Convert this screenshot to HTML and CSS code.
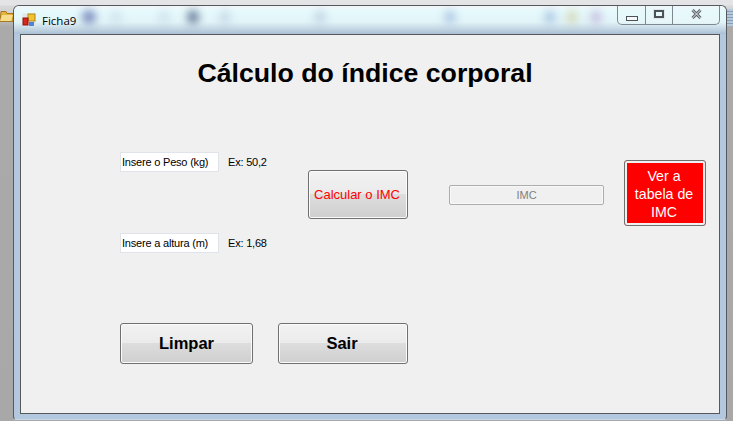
FILE: index.html
```html
<!DOCTYPE html>
<html lang="en">
  <head>
    <meta charset="UTF-8" />
    <title>Ficha9</title>
    <link rel="stylesheet" href="styles.css">
  </head>
  <body>
    <div class="desktop">
      <svg class="folder" width="13" height="13" viewBox="0 0 13 13">
        <path d="M1 2.5h5l1 2h6v8H0z" fill="#e8b23c" stroke="#a87a1c" stroke-width="1" />
        <path d="M2 6h11l-2 6H0z" fill="#f7dc8a" />
      </svg>
      <div class="behind-strip"></div>
      <div class="window">
        <div class="titlebar">
          <span class="blob b1"></span>
          <span class="blob b2"></span>
          <span class="blob b3"></span>
          <span class="blob b4"></span>
          <span class="blob b5"></span>
          <span class="blob b6"></span>
          <span class="blob b7"></span>
          <span class="blob b8"></span>
          <span class="blob b9"></span>
          <span class="blob b10"></span>
          <svg class="app-icon" width="14" height="14" viewBox="0 0 14 14">
            <rect x="0.5" y="0.5" width="13" height="13" fill="#e4e4e4" />
            <rect x="6" y="1" width="7" height="7" fill="#f2c230" stroke="#b08a18" />
            <rect x="1" y="5" width="5" height="7" fill="#d8261c" stroke="#8a1510" />
            <rect x="7" y="9" width="5" height="4" fill="#4a86d8" />
          </svg>
          <span class="title-text">Ficha9</span>
          <div class="win-buttons">
            <div class="win-btn min"><span class="min-glyph"></span></div>
            <div class="win-btn max"><span class="max-glyph"></span></div>
            <div class="win-btn close">
              <svg width="11" height="10" viewBox="0 0 11 10">
                <path d="M1.5 1l8 8M9.5 1l-8 8" stroke="#5a6068" stroke-width="3" />
                <path d="M1.5 1l8 8M9.5 1l-8 8" stroke="#eef2f5" stroke-width="1" />
              </svg>
            </div>
          </div>
        </div>
        <div class="client">
          <h1 class="heading">Cálculo do índice corporal</h1>
          <div class="form-row">
            <div class="inputs">
              <div class="input-row">
                <div class="textbox">Insere o Peso (kg)</div>
                <span class="hint">Ex: 50,2</span>
              </div>
              <div class="input-row">
                <div class="textbox">Insere a altura (m)</div>
                <span class="hint">Ex: 1,68</span>
              </div>
            </div>
            <button class="btn btn-calc">Calcular o IMC</button>
            <div class="result">IMC</div>
            <button class="btn-red">Ver a tabela de IMC</button>
          </div>
          <div class="actions">
            <button class="btn btn-big btn-clear">Limpar</button>
            <button class="btn btn-big btn-exit">Sair</button>
          </div>
        </div>
      </div>
    </div>
  </body>
</html>
```

FILE: styles.css
```css
html {
  font-family: "Liberation Sans", Arial, sans-serif;
}
body {
  margin: 0;
  padding: 0;
  overflow: hidden;
}
.desktop {
  position: relative;
  width: 733px;
  height: 421px;
  overflow: hidden;
  padding: 5px 6px 0 13px;
  box-sizing: border-box;
  background: linear-gradient(to bottom, #e4e4e6 0, #e4e4e6 5px, #d8d8da 6px, #cfcfcf 14px, #aaa 27px, #a8a8a8 100%);
}
.folder {
  position: absolute;
  left: 0;
  top: 9px;
}
.behind-strip {
  position: absolute;
  right: 0;
  top: 9px;
  width: 8px;
  height: 17px;
  background: repeating-linear-gradient(to bottom, #b4c8de 0, #b4c8de 2px, #8d9cb0 2px, #8d9cb0 3px);
}
.window {
  position: relative;
  height: 415px;
  display: flex;
  flex-direction: column;
  box-sizing: border-box;
  border: 1px solid #55585c;
  border-bottom-color: #c9d8e8;
  border-radius: 6px 6px 4px 4px;
  background: #b3c8df;
}
.titlebar {
  position: relative;
  height: 28px;
  flex-shrink: 0;
  display: flex;
  align-items: center;
  padding-left: 8px;
  overflow: hidden;
  border-radius: 5px 5px 0 0;
  background: linear-gradient(to bottom, #f2f5f7 0, #e6fafd 5px, #e2f4f8 16px, #c8dbe6 22px, #aabfd4 28px);
}
.blob {
  position: absolute;
  top: 4px;
  width: 12px;
  height: 14px;
  border-radius: 50%;
  background: #8a9cc0;
  filter: blur(4px);
  opacity: 0.5;
}
.b1 { left: 68px; background: #6f80b8; width: 14px; opacity: 0.9; }
.b2 { left: 173px; background: #55688a; opacity: 0.85; }
.b3 { left: 96px; opacity: 0.2; }
.b4 { left: 144px; opacity: 0.2; }
.b5 { left: 205px; opacity: 0.3; }
.b6 { left: 300px; opacity: 0.35; }
.b7 { left: 430px; background: #7f9fd0; }
.b8 { left: 530px; background: #7f9fd0; }
.b9 { left: 552px; background: #c8c080; }
.b10 { left: 576px; background: #b090c8; }
.app-icon {
  position: relative;
  flex-shrink: 0;
}
.title-text {
  position: relative;
  margin-left: 6px;
  font-family: "Open Sans", "Liberation Sans", sans-serif;
  font-size: 11.5px;
  color: #000;
}
.win-buttons {
  position: absolute;
  top: -1px;
  right: 6px;
  display: flex;
  height: 19px;
  border: 1px solid #7d8890;
  border-top: 0;
  border-radius: 0 0 5px 5px;
  background: rgba(235, 248, 250, 0.45);
}
.win-btn {
  display: flex;
  align-items: center;
  justify-content: center;
  height: 19px;
  box-sizing: border-box;
}
.min { width: 28px; border-right: 1px solid #7d8890; }
.max { width: 27px; border-right: 1px solid #7d8890; }
.close { width: 46px; }
.min-glyph {
  width: 10px;
  height: 3px;
  margin-top: 7px;
  border: 1px solid #4c5258;
  background: #f4f6f8;
}
.max-glyph {
  width: 6px;
  height: 4px;
  border: 2px solid #4c5258;
  outline: 1px solid #dfe6ea;
  margin-top: -1px;
}
.close svg {
  margin-top: -2px;
}
.client {
  flex: 1;
  margin: 0 6px 5px 6px;
  box-sizing: border-box;
  border: 1px solid #55585c;
  background: #f0f0f0;
}
.heading {
  margin: 22px 0 0;
  height: 32px;
  padding-right: 10px;
  text-align: center;
  font-size: 26.7px;
  line-height: 32px;
  font-weight: bold;
  color: #000;
}
.form-row {
  display: flex;
  align-items: flex-start;
  margin-top: 63px;
  padding-left: 99px;
}
.inputs {
  display: flex;
  flex-direction: column;
  gap: 61px;
  width: 188px;
}
.input-row {
  display: flex;
  align-items: center;
  gap: 9px;
}
.textbox {
  width: 99px;
  height: 20px;
  box-sizing: border-box;
  padding-left: 1px;
  border: 1px solid #e0e4ea;
  background: #fff;
  font-size: 11px;
  letter-spacing: -0.2px;
  line-height: 18px;
  color: #000;
  white-space: nowrap;
}
.hint {
  font-size: 11px;
  letter-spacing: -0.2px;
  color: #000;
}
.btn {
  padding: 0;
  box-sizing: border-box;
  border: 1px solid #707070;
  border-radius: 3px;
  font-family: inherit;
  background: linear-gradient(to bottom, #f2f2f2 0, #ebebeb 48%, #dddddd 50%, #cfcfcf 100%);
  box-shadow: inset 0 0 0 1px #fbfbfb;
}
.btn-calc {
  width: 100px;
  height: 49px;
  margin-top: 18px;
  padding-right: 2px;
  font-size: 13px;
  color: #f00;
}
.result {
  width: 155px;
  height: 20px;
  margin: 33px 0 0 41px;
  box-sizing: border-box;
  border: 1px solid #adadad;
  border-radius: 2px;
  box-shadow: inset 0 0 0 1px #f8f8f8;
  text-align: center;
  font-size: 11px;
  line-height: 18px;
  color: #7f7f7f;
}
.btn-red {
  width: 82px;
  height: 66px;
  margin: 8px 0 0 20px;
  padding: 2px 8px 0 6px;
  box-sizing: border-box;
  border: 1px solid #707070;
  border-radius: 3px;
  outline: 2px solid #f0f0f0;
  outline-offset: -3px;
  background: #f00;
  font-family: inherit;
  font-size: 14.2px;
  line-height: 18px;
  color: #fff;
}
.actions {
  display: flex;
  gap: 25px;
  margin-top: 70px;
  padding-left: 99px;
}
.btn-big {
  height: 41px;
  font-size: 16.5px;
  font-weight: bold;
  color: #000;
}
.btn-clear { width: 133px; }
.btn-exit { width: 130px; padding-right: 2px; }
```
